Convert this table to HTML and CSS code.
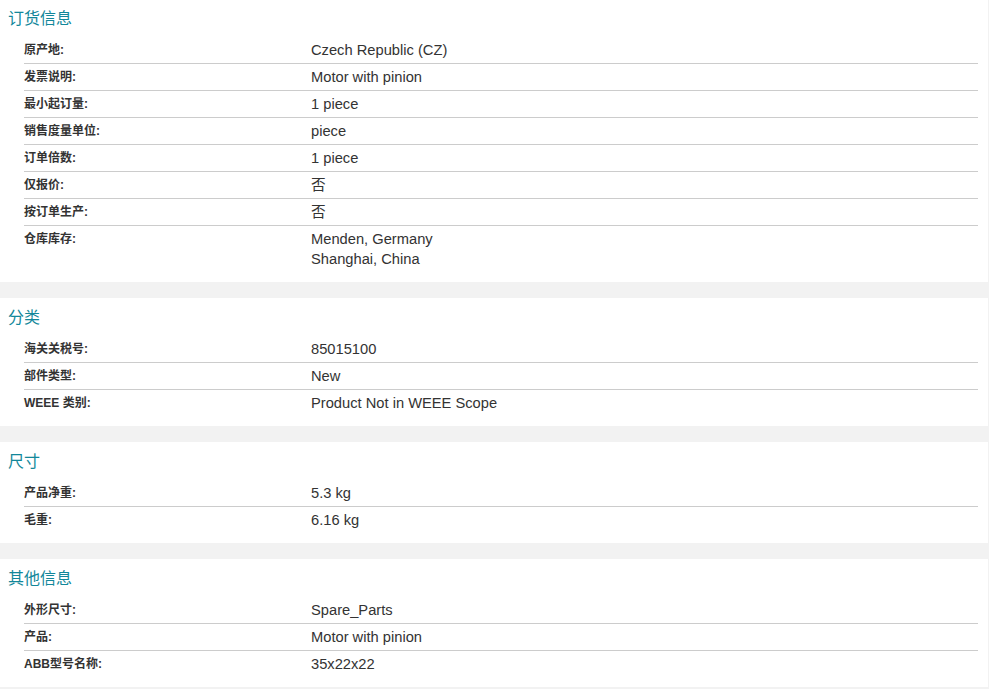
FILE: index.html
```html
<!DOCTYPE html>
<html lang="zh">
<head>
<meta charset="utf-8">
<title>产品信息</title>
<link rel="stylesheet" href="styles.css">
</head>
<body>
<div class="page">
  <section class="section first">
    <h2 class="title">订货信息</h2>
    <div class="rows">
      <div class="row"><div class="label">原产地:</div><div class="value">Czech Republic (CZ)</div></div>
      <div class="row"><div class="label">发票说明:</div><div class="value">Motor with pinion</div></div>
      <div class="row"><div class="label">最小起订量:</div><div class="value">1 piece</div></div>
      <div class="row"><div class="label">销售度量单位:</div><div class="value">piece</div></div>
      <div class="row"><div class="label">订单倍数:</div><div class="value">1 piece</div></div>
      <div class="row"><div class="label">仅报价:</div><div class="value">否</div></div>
      <div class="row"><div class="label">按订单生产:</div><div class="value">否</div></div>
      <div class="row"><div class="label">仓库库存:</div><div class="value">Menden, Germany<br>Shanghai, China</div></div>
    </div>
  </section>
  <section class="section">
    <h2 class="title">分类</h2>
    <div class="rows">
      <div class="row"><div class="label">海关关税号:</div><div class="value">85015100</div></div>
      <div class="row"><div class="label">部件类型:</div><div class="value">New</div></div>
      <div class="row"><div class="label">WEEE 类别:</div><div class="value">Product Not in WEEE Scope</div></div>
    </div>
  </section>
  <section class="section">
    <h2 class="title">尺寸</h2>
    <div class="rows">
      <div class="row"><div class="label">产品净重:</div><div class="value">5.3 kg</div></div>
      <div class="row"><div class="label">毛重:</div><div class="value">6.16 kg</div></div>
    </div>
  </section>
  <section class="section">
    <h2 class="title">其他信息</h2>
    <div class="rows">
      <div class="row"><div class="label">外形尺寸:</div><div class="value">Spare_Parts</div></div>
      <div class="row"><div class="label">产品:</div><div class="value">Motor with pinion</div></div>
      <div class="row"><div class="label">ABB型号名称:</div><div class="value">35x22x22</div></div>
    </div>
  </section>
</div>
</body>
</html>
```

FILE: styles.css
```css
html, body {
  margin: 0;
  padding: 0;
  background: #f2f2f2;
}
body {
  font-family: "Liberation Sans", Arial, "Noto Sans CJK SC", sans-serif;
  color: #333;
}
.page {
  display: flex;
  flex-direction: column;
  gap: 16px;
  width: 988px;
}
.section {
  background: #fff;
  padding: 8px 10px 10px 0;
}
.section.first {
  padding-top: 7px;
}
.title {
  margin: 0 0 7px 8px;
  padding-top: 1px;
  font-size: 16px;
  line-height: 22px;
  font-weight: normal;
  color: #12879a;
}
.rows {
  margin-left: 24px;
}
.row {
  display: flex;
  padding: 3px 0;
  border-bottom: 1px solid #cccccc;
}
.row:last-child {
  border-bottom: none;
}
.label {
  width: 287px;
  flex: none;
  font-size: 12px;
  font-weight: bold;
  line-height: 20px;
  color: #333;
}
.value {
  font-size: 14.7px;
  line-height: 20px;
  color: #333;
}
```
